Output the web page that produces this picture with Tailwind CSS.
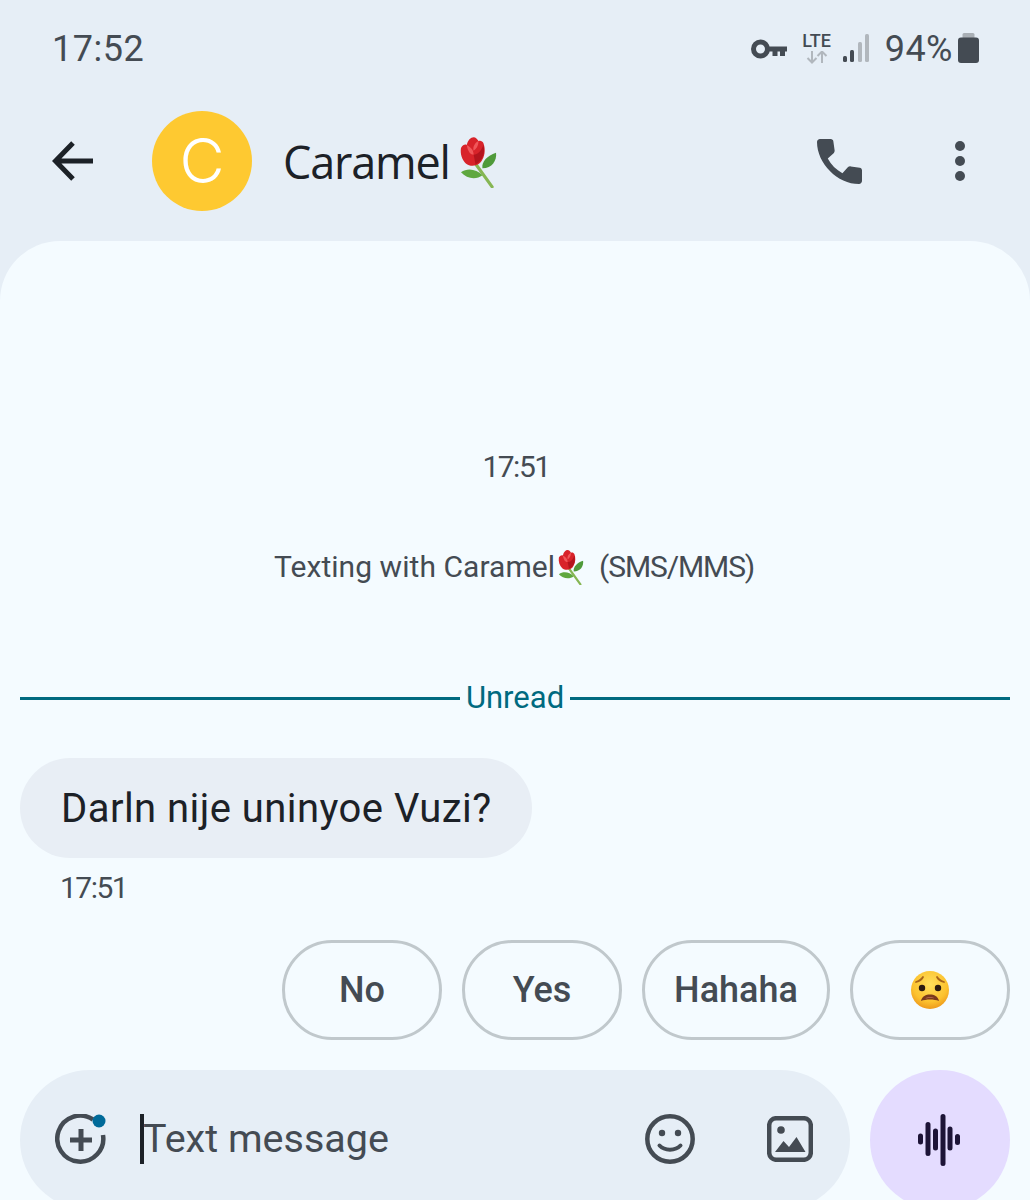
<!doctype html>
<html><head><meta charset="utf-8"><script src="https://cdn.jsdelivr.net/npm/@tailwindcss/browser@4"></script></head>
<body class="m-0">
<svg width="0" height="0" class="absolute">
<defs>
<symbol id="rose" viewBox="0 0 38 52">
<path d="M15 26 L33 51" stroke="#86b653" stroke-width="3.200" stroke-linecap="round" fill="none"/>
<path d="M23 32 C22 25 28 19 37 16 C38 24 33 32 23 32Z" fill="#4f9a3a"/>
<path d="M23 39 C17 33 8 31 1 36 C7 43 17 44 23 39Z" fill="#5fa83f"/>
<path d="M1 11 C3 8 5 7 7 8 C8 3 11 0 14 0 C16 0 18 2 19 4 C21 3 23 4 24 6 C26 11 26 18 23 23 C20 30 11 31 6 27 C2 23 0 17 1 11Z" fill="#d8232a"/>
<path d="M7 8 C10 10 14 12 14 18 C11 18 8 15 7 8Z M19 4 C19 9 17 12 14 14 C13 10 15 6 19 4Z" fill="#f0575a"/>
<path d="M14 18 C18 18 22 14 24 8 C26 15 24 24 16 28Z" fill="#b3141d"/>
</symbol>
<radialGradient id="fg" cx="50%" cy="35%" r="65%"><stop offset="0" stop-color="#ffdf5c"/><stop offset="0.7" stop-color="#fcc22f"/><stop offset="1" stop-color="#ee9a1c"/></radialGradient>
</defs>
</svg>
<div class="relative w-[1030px] h-[1200px] overflow-hidden bg-[#e6eef6] flex flex-col font-['Roboto',sans-serif] text-[#444b53]">

<!-- status bar -->
<div class="h-[96px] shrink-0 flex items-center pl-[52px] pr-[51px]">
  <span class="text-[36px] leading-none tracking-[0.5px] mt-[2px]">17:52</span>
  <div class="ml-auto flex items-center">
    <svg width="36" height="20" viewBox="0 0 36 20" class="mr-[15px] mt-[2px]"><circle cx="9.500" cy="10" r="7" fill="none" stroke="#444b53" stroke-width="5"/><path d="M14 7.500h22v5h-2v4.500h-5v-4.500h-2.500v4.500h-5v-4.500H14z" fill="#444b53"/></svg>
    <div class="flex flex-col items-center w-[30px] mr-[11px] -mt-[1px]">
      <span class="text-[18px] leading-[18px] font-medium text-[#444b53] tracking-[0px]">LTE</span>
      <svg width="24" height="13" viewBox="0 0 24 13" class="mt-[1px]"><path d="M7 0v11M2.500 7 7 11.500 11.500 7M17 12V1M12.500 5 17 .5 21.500 5" fill="none" stroke="#b1b7bd" stroke-width="2"/></svg>
    </div>
    <svg width="26" height="28" viewBox="0 0 26 28" class="mr-[18px]"><rect x="0" y="22" width="4" height="6" rx="1.500" fill="#444b53"/><rect x="7" y="16" width="4" height="12" rx="1.500" fill="#444b53"/><rect x="15" y="8" width="4" height="20" rx="1.500" fill="#b1b7bd"/><rect x="22" y="0" width="4" height="28" rx="1.500" fill="#b1b7bd"/></svg>
    <span class="text-[36px] leading-none tracking-[0.5px] mr-[5px] mt-[2px] -ml-[2px]">94%</span>
    <svg width="21" height="30" viewBox="0 0 21 30"><path d="M6 0h9a1.500 1.500 0 0 1 1.500 1.500V5H4.500V1.500A1.500 1.500 0 0 1 6 0z" fill="#a9afb5"/><rect x="0" y="4.500" width="21" height="25.500" rx="3" fill="#444b53"/></svg>
  </div>
</div>

<!-- header -->
<div class="h-[130px] shrink-0 flex items-center">
  <svg width="41" height="40" viewBox="0 0 41 40" class="ml-[52px]"><path d="M41 20H4.500M21 2 3.500 20 21 38" fill="none" stroke="#1c2127" stroke-width="5"/></svg>
  <div class="ml-[59px] w-[100px] h-[100px] rounded-full bg-[#fec931] flex items-center justify-center text-white text-[62px] leading-none font-light font-['Inter',sans-serif]">C</div>
  <span class="ml-[31px] text-[45px] leading-none text-[#1c2127] font-['Open_Sans',sans-serif] tracking-[-1.2px]">Caramel</span>
  <svg width="37" height="51" class="ml-[10px] mt-[2px]"><use href="#rose"/></svg>
  <svg width="45" height="45" viewBox="0 0 46 46" class="ml-auto"><path d="M3 0h11c1.500 0 2.500 1 2.700 2.300l1.300 9.200c.2 1.200-.2 2.200-1 3L11 20c3.500 6.500 8.500 11.500 15 15l5.500-6c.8-.8 1.800-1.200 3-1l9.200 1.300c1.300.2 2.300 1.200 2.300 2.700v11c0 1.600-1.400 3-3 3C21 46 0 25 0 3c0-1.600 1.400-3 3-3z" fill="#444b53"/></svg>
  <div class="ml-[93px] mr-[65px] flex flex-col gap-[5px]">
    <div class="w-[10px] h-[10px] rounded-full bg-[#444b53]"></div>
    <div class="w-[10px] h-[10px] rounded-full bg-[#444b53]"></div>
    <div class="w-[10px] h-[10px] rounded-full bg-[#444b53]"></div>
  </div>
</div>
<div class="h-[15px] shrink-0"></div>

<!-- conversation panel -->
<div class="flex-1 bg-[#f4fbff] rounded-t-[60px] flex flex-col">
  <div class="mt-[206px] h-[40px] flex items-center justify-center text-[30px] leading-none tracking-[-1.500px] pl-[2px]">17:51</div>
  <div class="mt-[60px] h-[40px] flex items-center text-[30px] leading-none pl-[274px]">
    <span class="w-[284px] tracking-[0.05px]">Texting with Caramel</span>
    <svg width="26" height="35"><use href="#rose"/></svg>
    <span class="ml-[15px] tracking-[-1.100px]">(SMS/MMS)</span>
  </div>
  <div class="mt-[91px] mx-[20px] h-[40px] flex items-center text-[31px] leading-none text-[#006a80]">
    <div class="flex-1 h-[3px] bg-[#006a80] mt-[1px]"></div>
    <span class="px-[6px] -mt-[1px]">Unread</span>
    <div class="flex-1 h-[3px] bg-[#006a80] mt-[1px]"></div>
  </div>
  <div class="mt-[40px] ml-[20px] w-[512px] h-[100px] rounded-[50px] bg-[#e8eef5] flex items-center pl-[41px] pt-[2px] text-[40px] leading-none tracking-[0.45px] text-[#1c2127]">Darln nije uninyoe Vuzi?</div>
  <div class="mt-[10px] ml-[60px] h-[40px] flex items-center text-[30px] leading-none tracking-[-1.500px]">17:51</div>
  <div class="mt-[32px] mr-[20px] flex justify-end gap-[20px] text-[36px] leading-none font-medium">
    <div class="w-[160px] h-[100px] rounded-[50px] border-[3px] border-[#c0c8cc] flex items-center justify-center">No</div>
    <div class="w-[160px] h-[100px] rounded-[50px] border-[3px] border-[#c0c8cc] flex items-center justify-center">Yes</div>
    <div class="w-[188px] h-[100px] rounded-[50px] border-[3px] border-[#c0c8cc] flex items-center justify-center">Hahaha</div>
    <div class="w-[160px] h-[100px] rounded-[50px] border-[3px] border-[#c0c8cc] flex items-center justify-center">
      <svg width="40" height="40" viewBox="0 0 40 40"><circle cx="20" cy="20" r="19" fill="url(#fg)"/><circle cx="12" cy="18" r="3.200" fill="#2b1a10"/><circle cx="28" cy="18" r="3.200" fill="#2b1a10"/><path d="M6 12c3-1 6-3 7-5M34 12c-3-1-6-3-7-5" stroke="#a8641a" stroke-width="1.800" fill="none" stroke-linecap="round"/><path d="M11 31c1-5 5-6.500 9-6.500s8 1.500 9 6.500c-5-2-13-2-18 0z" fill="#7a3a1c"/><path d="M14 28.500c3-1.500 9-1.500 12 0-3-.7-9-.7-12 0z" fill="#e08a7a"/></svg>
    </div>
  </div>
  <div class="mt-[30px] mx-[20px] flex gap-[20px]">
    <div class="relative w-[830px] h-[140px] rounded-[70px] bg-[#e6eef6] flex items-start pt-[44px]">
      <svg width="52" height="52" viewBox="0 0 52 52" class="ml-[35px]"><path d="M38 5.500A23 23 0 1 0 48 21" fill="none" stroke="#444b53" stroke-width="4.500"/><path d="M26 15v22M15 26h22" stroke="#444b53" stroke-width="5" fill="none"/><circle cx="44" cy="7" r="6.500" fill="#006a99"/></svg>
      <div class="ml-[33px] w-[4px] h-[50px] bg-[#1c2127]"></div>
      <span class="text-[39.500px] leading-[50px] ml-[-1px] text-[#444b53]">Text message</span>
      <svg width="50" height="50" viewBox="0 0 50 50" class="ml-auto"><circle cx="25" cy="25" r="22.700" fill="none" stroke="#444b53" stroke-width="4.500"/><circle cx="17" cy="19" r="3.200" fill="#444b53"/><circle cx="33" cy="19" r="3.200" fill="#444b53"/><path d="M14.500 31.500c5 5.500 16 5.500 21 0" fill="none" stroke="#444b53" stroke-width="4" stroke-linecap="round"/></svg>
      <svg width="46" height="46" viewBox="0 0 46 46" class="ml-[72px] mr-[37px] mt-[2px]"><rect x="2.200" y="2.200" width="41.600" height="41.600" rx="7" fill="none" stroke="#444b53" stroke-width="4.500"/><circle cx="14" cy="14" r="3.800" fill="#444b53"/><path d="M8 36l8.500-11 5.500 6 7.500-10 9 15z" fill="#444b53"/></svg>
    </div>
    <div class="w-[140px] h-[140px] rounded-full bg-[#e4dcff] flex items-start justify-center pt-[44px]">
      <svg width="44" height="52" viewBox="0 0 44 52"><g stroke="#1d1437" stroke-width="5" stroke-linecap="round" fill="none"><path d="M2.500 22v6M10 10.500v29M17.500 17v17M25 2.500v47M32 15v19M39.500 22.500v6" /></g></svg>
    </div>
  </div>
</div>
</div>
</body></html>
